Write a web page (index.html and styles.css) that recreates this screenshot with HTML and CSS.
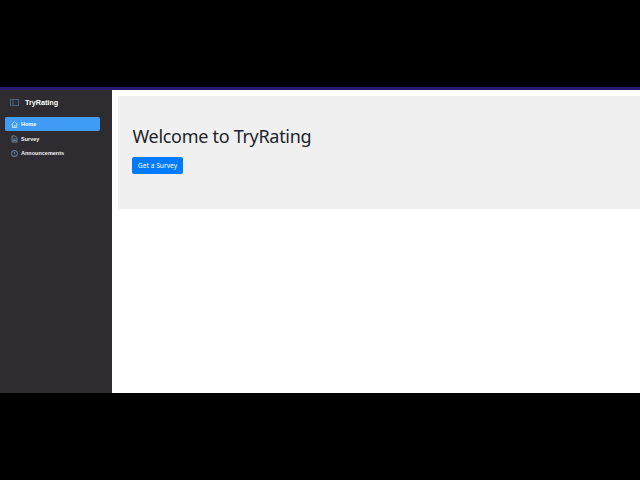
FILE: index.html
```html
<!DOCTYPE html>
<html lang="en">
<head>
<meta charset="utf-8">
<title>TryRating</title>
<link rel="stylesheet" href="styles.css">
</head>
<body>
<div class="letterbox"></div>
<div class="app">
  <aside class="sidebar">
    <div class="brand">
      <svg class="brand-icon" viewBox="0 0 9 7" width="9" height="7" fill="none" stroke="#46647e" stroke-width="1"><rect x="0.5" y="0.5" width="8" height="6"/><path d="M3 1v5"/></svg>
      <span class="brand-name">TryRating</span>
    </div>
    <nav class="nav">
      <a class="nav-item active">
        <svg class="nav-icon" viewBox="0 0 8 8" width="7" height="7" fill="none" stroke="#cfe8ff" stroke-width="0.9"><path d="M0.5 4L4 0.8 7.5 4M1.5 3.4V7.4h5V3.4M3.3 7.4V5.2h1.4v2.2"/></svg>
        <span>Home</span>
      </a>
      <a class="nav-item">
        <svg class="nav-icon" viewBox="0 0 8 8" width="7" height="8" fill="none" stroke="#7fa6c9" stroke-width="0.9"><path d="M1.2 0.5h3.6l2 2v5h-5.6zM2.5 4h3M2.5 5.7h3"/></svg>
        <span>Survey</span>
      </a>
      <a class="nav-item">
        <svg class="nav-icon" viewBox="0 0 8 8" width="7" height="7" fill="none" stroke="#7fa6c9" stroke-width="0.9"><circle cx="4" cy="4" r="3.5"/><path d="M4 2v2.6M4 5.5v0.8"/></svg>
        <span>Announcements</span>
      </a>
    </nav>
  </aside>
  <main class="main">
    <section class="hero">
      <h1 class="hero-title">Welcome to TryRating</h1>
      <a class="hero-button">Get a Survey</a>
    </section>
  </main>
</div>
<div class="letterbox letterbox-bottom"></div>
</body>
</html>
```
FILE: styles.css
```css
* { box-sizing: border-box; }
html, body { margin: 0; padding: 0; }
body {
  width: 640px;
  height: 480px;
  overflow: hidden;
  display: flex;
  flex-direction: column;
  background: #000;
  font-family: "Noto Sans", "Open Sans", sans-serif;
}
.letterbox { height: 87px; background: #000; flex: none; }
.letterbox-bottom { flex: 1; height: auto; }
.app {
  flex: none;
  height: 306px;
  display: flex;
  background: #fff;
  border-top: 3px solid #2a1a6b;
}
.sidebar {
  flex: none;
  width: 112px;
  background: #2e2c30;
  color: #fff;
  padding: 0 12px 0 5px;
  font-family: "Liberation Sans", Arial, sans-serif;
}
.brand {
  height: 24px;
  display: flex;
  align-items: center;
  padding-left: 5px;
  gap: 6px;
  font-size: 7.2px;
  font-weight: 700;
}
.nav {
  margin-top: 3px;
  display: flex;
  flex-direction: column;
}
.nav-item {
  height: 14.5px;
  display: flex;
  align-items: center;
  gap: 3px;
  padding-left: 6px;
  font-size: 5.5px;
  font-weight: 700;
  color: #f2f2f2;
}
.nav-item.active {
  background: #3f9bf5;
  border-radius: 2px;
  color: #fff;
  height: 14px;
  margin-bottom: 0.5px;
}
.main {
  flex: 1;
  padding: 6px 0 0 6px;
  min-width: 0;
}
.hero {
  height: 113px;
  background: #f0f0f0;
  border-radius: 2px 0 0 2px;
  padding: 28px 0 0 14.5px;
}
.hero-title {
  margin: 0;
  font-size: 18px;
  font-weight: 400;
  line-height: 25px;
  letter-spacing: -0.3px;
  color: #212529;
}
.hero-button {
  display: inline-flex;
  align-items: center;
  justify-content: center;
  width: 51px;
  height: 17px;
  margin-top: 8px;
  margin-left: -0.5px;
  background: #007bff;
  border-radius: 2px;
  color: #fff;
  font-size: 6.7px;
}
```
